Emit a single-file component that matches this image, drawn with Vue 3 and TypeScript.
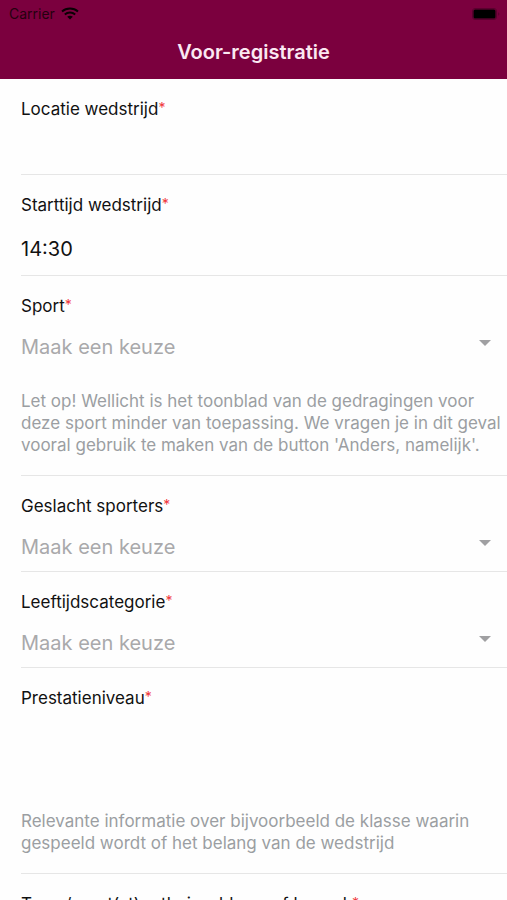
<script setup lang="ts">
import { ref } from 'vue'

interface Field {
  id: string
  label: string
  kind: 'text' | 'time' | 'select' | 'area'
  hint?: string
}

const fields: Field[] = [
  { id: 'locatie', label: 'Locatie wedstrijd', kind: 'text' },
  { id: 'starttijd', label: 'Starttijd wedstrijd', kind: 'time' },
  {
    id: 'sport',
    label: 'Sport',
    kind: 'select',
    hint: "Let op! Wellicht is het toonblad van de gedragingen voor deze sport minder van toepassing. We vragen je in dit geval vooral gebruik te maken van de button 'Anders, namelijk'.",
  },
  { id: 'geslacht', label: 'Geslacht sporters', kind: 'select' },
  { id: 'leeftijd', label: 'Leeftijdscategorie', kind: 'select' },
  {
    id: 'niveau',
    label: 'Prestatieniveau',
    kind: 'area',
    hint: 'Relevante informatie over bijvoorbeeld de klasse waarin gespeeld wordt of het belang van de wedstrijd',
  },
  { id: 'team', label: 'Team/sport(st)er thuisveld van of bezoek', kind: 'text' },
]

const values = ref<Record<string, string>>({
  locatie: '',
  starttijd: '14:30',
  sport: '',
  geslacht: '',
  leeftijd: '',
  niveau: '',
  team: '',
})
</script>

<template>
  <div class="screen">
    <header class="top">
      <div class="status">
        <span class="carrier">Carrier</span>
        <svg class="wifi" viewBox="0 0 18 13" aria-hidden="true">
          <path d="M1 4.400C5.500 .6 12.500 .6 17 4.400" />
          <path d="M3.800 7.400C6.800 4.800 11.200 4.800 14.200 7.400" />
          <path class="dot" d="M6.200 9.700C7.800 8.300 10.200 8.300 11.800 9.700L9 12.600Z" />
        </svg>
        <svg class="battery" viewBox="0 0 28 12" aria-hidden="true">
          <rect class="shell" x="0.500" y="0.500" width="24" height="11" rx="2.500" />
          <rect x="1.500" y="1.500" width="22" height="9" rx="1.500" />
          <path class="shell" d="M26 4.500C27.200 5 27.200 7 26 7.500" />
        </svg>
      </div>
      <h1>Voor-registratie</h1>
    </header>
    <form class="form" @submit.prevent>
      <div v-for="f in fields" :key="f.id" class="field" :class="f.kind">
        <label :for="f.id">{{ f.label }}<span class="required">*</span></label>
        <div v-if="f.kind === 'select'" class="picker">
          <select :id="f.id" v-model="values[f.id]" required>
            <option value="">Maak een keuze</option>
          </select>
          <svg class="caret" viewBox="0 0 12 6" aria-hidden="true"><path d="M0 0H12L6 6Z" /></svg>
        </div>
        <textarea v-else-if="f.kind === 'area'" :id="f.id" v-model="values[f.id]"></textarea>
        <input v-else :id="f.id" v-model="values[f.id]" type="text" />
        <p v-if="f.hint" class="hint">{{ f.hint }}</p>
      </div>
    </form>
  </div>
</template>

<style>
body {
  margin: 0;
  background: #fff;
}
</style>

<style scoped>
.screen {
  height: 100vh;
  overflow: hidden;
  background: #fefefe;
  color: #111;
  font-family: Inter, 'Liberation Sans', sans-serif;
}
.top {
  background: #7b003e;
  padding-bottom: 15px;
}
.status {
  display: flex;
  align-items: center;
  height: 27px;
  padding: 0 7px 0 9px;
  color: #25000f;
  font-size: 14px;
}
.wifi {
  width: 18px;
  height: 13px;
  margin-left: 6px;
  fill: none;
  stroke: #0a0004;
  stroke-width: 2;
}
.wifi .dot {
  fill: #0a0004;
  stroke: none;
}
.battery {
  width: 28px;
  height: 12px;
  margin-left: auto;
}
.battery .shell {
  fill: none;
  stroke: #5a002e;
}
h1 {
  margin: 0;
  padding-top: 13px;
  color: #fbe8f2;
  font-size: 20px;
  font-weight: 600;
  line-height: 24px;
  text-align: center;
}
.form {
  padding-left: 21px;
}
.field {
  display: flex;
  flex-direction: column;
  padding-top: 19px;
  border-bottom: 1px solid #e6e6e6;
}
label {
  font-size: 17px;
  line-height: 22px;
}
.required {
  color: #f0383b;
  font-size: 14px;
  line-height: 14px;
  vertical-align: 2px;
}
input,
select,
textarea {
  appearance: none;
  box-sizing: border-box;
  width: 100%;
  margin: 0;
  padding: 0;
  border: 0;
  outline: 0;
  background: transparent;
  color: #111;
  font: inherit;
  font-size: 20px;
}
input {
  height: 54px;
}
.time input {
  height: 59px;
  padding-top: 6px;
}
.picker {
  display: flex;
  align-items: center;
  height: 54px;
  padding-right: 16px;
}
select {
  height: 54px;
  padding-top: 6px;
  color: #a9a9ab;
}
.caret {
  flex: none;
  width: 12px;
  height: 6px;
  margin-bottom: 2px;
  fill: #a0a0a2;
}
textarea {
  display: block;
  height: 82px;
  resize: none;
}
.hint {
  margin: 0;
  padding: 19px 4px 19px 0;
  color: #9b9ea2;
  font-size: 17px;
  line-height: 22px;
}
</style>
